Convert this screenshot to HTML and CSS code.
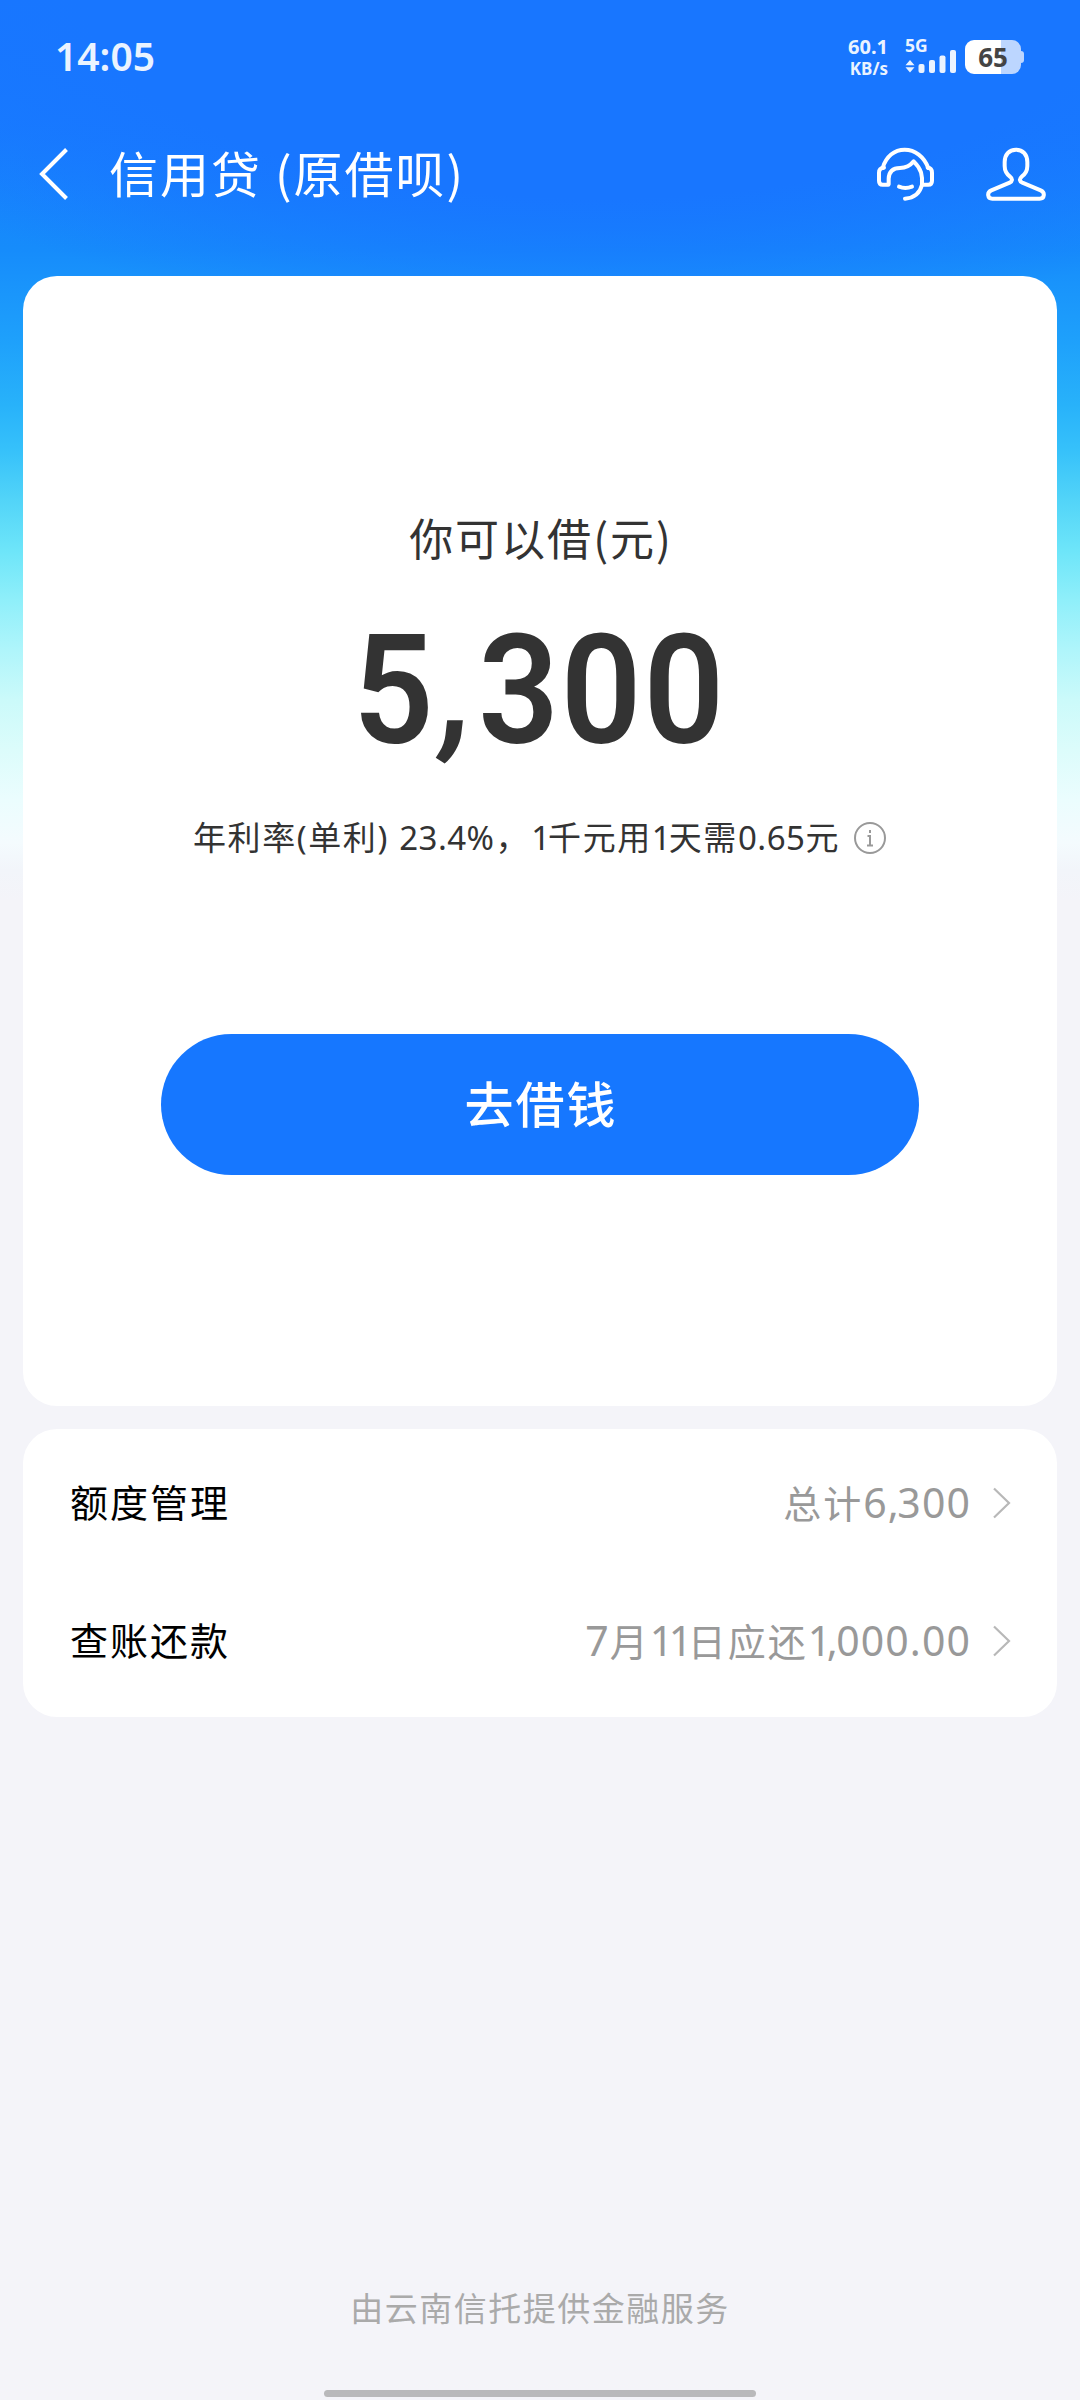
FILE: index.html
```html
<!DOCTYPE html>
<html lang="zh-CN">
<head>
<meta charset="utf-8">
<title>信用贷</title>
<link rel="stylesheet" href="styles.css">
</head>
<body>
<div class="screen">
  <div class="status">
    <span class="time">14:05</span>
    <div class="net"><span class="rate-num">60.1</span><span class="rate-unit">KB/s</span></div>
    <div class="signal">
      <span class="gen">5G</span>
      <svg width="52" height="24" viewBox="0 0 52 24" fill="#eaf3ff">
        <path d="M5 10l4.500 5.300h-9zM5 22.500l4.500-5.300h-9z"/>
        <rect x="13.500" y="14" width="6" height="9" rx="2"/>
        <rect x="24" y="10" width="6" height="13" rx="2"/>
        <rect x="34.500" y="5.500" width="6" height="17.500" rx="2"/>
        <rect x="45" y="0" width="6" height="23" rx="2"/>
      </svg>
    </div>
    <div class="battery">65</div>
  </div>

  <header class="nav">
    <svg class="back" width="32" height="52" viewBox="0 0 32 52" fill="none" stroke="#fff" stroke-width="4"><path d="M28.500 1.500L4 26l24.500 24.500"/></svg>
    <h1 class="title">信用贷<span class="paren-open">(</span>原借呗<span>)</span></h1>
    <svg class="support" width="60" height="60" viewBox="165 370 180 180" fill="none" stroke="#fff" stroke-width="12" stroke-linecap="round" stroke-linejoin="round">
      <path d="M188 442C198 408 223 387 254 387s58 21 71 55"/>
      <path d="M205 492H188Q177 492 177 480V456Q177 442 192 441"/>
      <path d="M323 441Q336 442 336 456V480Q336 492 325 492H308"/>
      <path d="M206 490V474C207 452 220 442 240 442C260 442 270 436 281 422C291 432 298 440 303 455C306 466 307 480 306 492C300 518 282 532 255 534"/>
      <path d="M237 498Q256 506 276 498"/>
    </svg>
    <svg class="user" width="62" height="60" viewBox="494 370 186 180" fill="none" stroke="#fff" stroke-width="12" stroke-linejoin="round">
      <path d="M587 387C566 387 553 402 553 424V436C553 450 560 461 569 468C578 475 576 482 568 486L513 509C499 515 501 534 516 534H658C673 534 675 515 661 509L606 486C597 482 596 475 604 468C614 461 621 450 621 436V424C621 402 608 387 587 387Z"/>
    </svg>
  </header>

  <main class="cards">
    <section class="card quota">
      <div class="label">你可以借<span>(</span>元<span>)</span></div>
      <div class="amount">5<span class="amount-sep">,</span>300</div>
      <div class="rate"><span class="rate-text">年利率(单利) <b>23.4%</b><span class="comma">，</span><b class="one">1</b>千元用<b class="one">1</b>天需<b>0.65</b>元</span>
        <svg width="34" height="34" viewBox="0 0 34 34" fill="none" stroke="#999" stroke-width="2"><circle cx="17" cy="17" r="15"/><path d="M17 9v3M14.500 15h2.500v9.500M14 24.500h6"/></svg>
      </div>
      <button class="borrow">去借钱</button>
    </section>
    <section class="card list">
      <div class="row"><span class="name">额度管理</span><span class="value">总计<b>6<i class="sep">,</i>300</b></span>
        <svg class="chev" width="20" height="32" viewBox="0 0 20 32" fill="none" stroke="#b8b8b8" stroke-width="2.200"><path d="M2 1.500L17 16 2 30.500"/></svg></div>
      <div class="row"><span class="name">查账还款</span><span class="value"><b>7</b>月<b class="one">11</b>日应还<b><i class="one">1</i><i class="sep">,</i>000.00</b></span>
        <svg class="chev" width="20" height="32" viewBox="0 0 20 32" fill="none" stroke="#b8b8b8" stroke-width="2.200"><path d="M2 1.500L17 16 2 30.500"/></svg></div>
    </section>
  </main>

  <footer class="foot"><span>由云南信托提供金融服务</span><i class="home"></i></footer>
</div>
</body>
</html>
```
FILE: styles.css
```css
* { box-sizing: border-box; }
body { margin: 0; font-family: "Noto Sans", "Noto Sans CJK SC", sans-serif; }
.screen {
  width: 1080px; height: 2400px; display: flex; flex-direction: column;
  background:
    radial-gradient(ellipse 850px 330px at 600px 0, #1876ff 0, #1876ff 60%, rgba(24,118,255,0) 100%),
    linear-gradient(#1876ff 0, #177cff 120px, #168cfb 250px, #1ea0fb 339px, #28b2fa 405px, #36c1fa 450px, #52d4f8 500px, #6de5f9 550px, #8feffa 600px, #aff5fb 650px, #cbfafa 700px, #dcfcfb 750px, #ebfdfe 800px, #f4fbfe 843px, #f2f5fa 870px, #f4f4f9 900px);
}
.status { height: 114px; display: flex; align-items: flex-start; padding: 38px 59px 0 55px; color: #eaf3ff; font-weight: 600; }
.time { font-size: 39px; line-height: 35px; flex: 1; }
.net { width: 56px; display: flex; flex-direction: column; align-items: flex-end; margin-right: 17px; font-weight: 700; }
.rate-num { font-size: 20px; line-height: 18px; }
.rate-unit { font-size: 17px; line-height: 26px; }
.signal { width: 52px; margin: 1px 8px 0 0; display: flex; flex-direction: column; }
.gen { font-size: 17.5px; line-height: 13px; font-weight: 700; height: 11px; }
.battery {
  width: 56px; height: 34px; border-radius: 9px; margin-top: 2px; position: relative;
  background: linear-gradient(90deg, #fff 36px, #bcd6ff 36px);
  color: #444; font-size: 26px; line-height: 34px; text-align: center; font-weight: 700;
}
.battery::after { content: ""; position: absolute; left: 56px; top: 11px; width: 3px; height: 12px; border-radius: 0 3px 3px 0; background: #bcd6ff; }
.nav { height: 120px; display: flex; align-items: center; padding: 0 33px 0 38px; color: #fff; }
.title { margin: 0 0 0 39px; padding-bottom: 5px; flex: 1; font: 400 49px/60px "Noto Sans CJK SC", sans-serif; letter-spacing: 2px; white-space: nowrap; }
.paren-open { margin-left: 13px; }
.support { margin-right: 50px; }
.cards { display: flex; flex-direction: column; gap: 23px; margin: 42px 23px 0; }
.card { background: #fff; border-radius: 34px; }
.quota { height: 1130px; display: flex; flex-direction: column; align-items: center; color: #333; }
.label { margin-top: 231px; padding-left: 2px; font: 400 44px/60px "Noto Sans CJK SC", sans-serif; letter-spacing: 2px; }
.amount { font: 600 152px/180px Roboto, sans-serif; letter-spacing: 2px; margin-top: 34px; transform: scaleX(.93); }
.amount-sep { display: inline-block; margin: 0 2px 0 6px; transform: translateY(-5px) skewX(-7deg); }
.rate { display: flex; align-items: center; gap: 13px; height: 44px; margin-top: 35px; font-size: 33px; line-height: 44px; letter-spacing: 1.600px; white-space: nowrap; }
.rate b { font-weight: 400; letter-spacing: .500px; }
.rate .comma { margin-left: 1px; margin-right: 1px; }
.rate .one { letter-spacing: -2px; }
.borrow { margin-top: 174px; width: 758px; height: 141px; border: 0; border-radius: 71px; background: #1677ff; color: #fff; font: 500 49px/60px "Noto Sans CJK SC", sans-serif; letter-spacing: 2px; padding: 0 0 6px 2px; }
.list { height: 288px; padding: 5px 45px 7px 47px; }
.row { height: 138px; display: flex; align-items: center; font-size: 38px; line-height: 50px; letter-spacing: 2px; }
.name { color: #000; flex: 1; padding-bottom: 2px; }
.value { color: #999; margin-right: 21px; padding-bottom: 1px; }
.value b { font-weight: 400; font-size: 41px; letter-spacing: 1.100px; }
.value i { font-style: normal; }
.value .one { letter-spacing: -4.500px; }
.value .sep { letter-spacing: -1.500px; }
.foot { margin-top: auto; height: 120px; display: flex; flex-direction: column; align-items: center; color: #aaa; font-size: 33px; line-height: 44px; letter-spacing: 1.500px; padding-top: 7px; }
.home { width: 432px; height: 7px; border-radius: 4px; background: #b9b9bb; margin-top: 59px; }
```
